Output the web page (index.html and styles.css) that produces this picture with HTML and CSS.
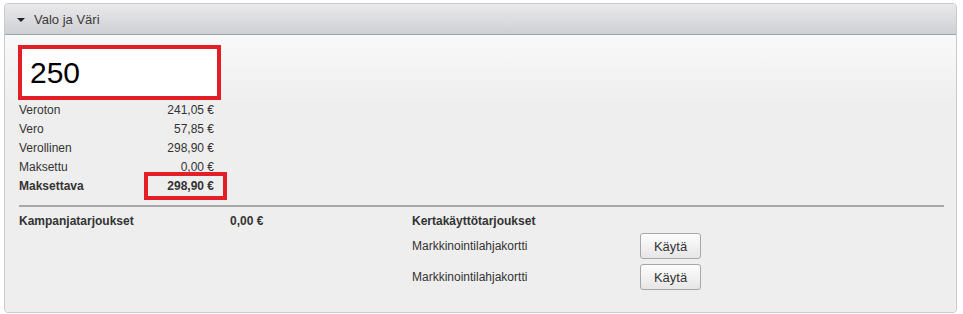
FILE: index.html
```html
<!DOCTYPE html>
<html lang="fi">
<head>
    <meta charset="UTF-8">
    <title>Valo ja Väri</title>
    <link rel="stylesheet" href="styles.css">
</head>
<body>
    <div class="panel">
        <div class="panel-head">
            <span class="caret"></span>
            <span class="panel-title">Valo ja Väri</span>
        </div>
        <div class="panel-body">
            <div class="amount-box">250</div>

            <table class="totals">
                <tr><td>Veroton</td><td class="num">241,05 €</td></tr>
                <tr><td>Vero</td><td class="num">57,85 €</td></tr>
                <tr><td>Verollinen</td><td class="num">298,90 €</td></tr>
                <tr><td>Maksettu</td><td class="num">0,00 €</td></tr>
                <tr class="strong"><td>Maksettava</td><td class="num"><span class="mark">298,90 €</span></td></tr>
            </table>

            <hr class="divider">

            <div class="offers">
                <div class="campaign">
                    <span class="campaign-label">Kampanjatarjoukset</span>
                    <span class="campaign-value">0,00 €</span>
                </div>
                <div class="single-use">
                    <div class="single-title">Kertakäyttötarjoukset</div>
                    <div class="offer-row">
                        <span class="offer-name">Markkinointilahjakortti</span>
                        <button class="btn">Käytä</button>
                    </div>
                    <div class="offer-row">
                        <span class="offer-name">Markkinointilahjakortti</span>
                        <button class="btn">Käytä</button>
                    </div>
                </div>
            </div>
        </div>
    </div>
</body>
</html>
```

FILE: styles.css
```css
body {
    margin: 0;
    padding: 3px 6px 2px 4px;
    font-family: "Liberation Sans", Arial, sans-serif;
    font-size: 12px;
    color: #333;
    background-color: #ffffff;
}
.panel {
    border: 1px solid #c9cccf;
    border-radius: 4px;
    background-color: #eeeeee;
    overflow: hidden;
}
.panel-head {
    height: 30px;
    display: flex;
    align-items: center;
    padding-left: 12px;
    background: linear-gradient(#e9e9eb, #cfd0d4);
    border-bottom: 1px solid #9aa6ad;
}
.caret {
    width: 0;
    height: 0;
    border-left: 4px solid transparent;
    border-right: 4px solid transparent;
    border-top: 4px solid #222;
    margin-right: 9px;
    margin-top: 1px;
}
.panel-title {
    font-size: 13px;
    color: #3a3a3a;
}
.panel-body {
    padding: 10px 12px 17px 13px;
    background: linear-gradient(#f9f9f9, #eeeeee 70px);
}
.amount-box {
    width: 187px;
    height: 47px;
    border: 4px solid #e21f26;
    background-color: #ffffff;
    font-size: 30px;
    line-height: 47px;
    padding-left: 8px;
    color: #000;
}
.totals {
    border-collapse: collapse;
    width: 196px;
    margin-top: 1px;
}
.totals td {
    padding: 0 0 0 1px;
    height: 19px;
    line-height: 19px;
}
.totals .num {
    text-align: right;
}
.totals .strong td {
    font-weight: bold;
}
.mark {
    border: 4px solid #e21f26;
    padding: 3px 9px 3px 19px;
    margin-right: -13px;
}
.divider {
    border: none;
    border-top: 2px solid #a8a8a8;
    margin: 9px 0 0 1px;
    width: 925px;
}
.offers {
    display: flex;
    padding-left: 1px;
    margin-top: 7px;
}
.campaign {
    width: 393px;
    font-weight: bold;
    display: flex;
}
.campaign-label {
    width: 211px;
}
.single-title {
    font-weight: bold;
    margin-bottom: 5px;
}
.offer-row {
    display: flex;
    align-items: center;
    margin-bottom: 5px;
}
.offer-name {
    width: 228px;
}
.btn {
    width: 61px;
    height: 26px;
    padding: 0;
    font-family: "Liberation Sans", Arial, sans-serif;
    font-size: 13px;
    color: #333;
    background: linear-gradient(#fdfdfd, #e6e6e6);
    border: 1px solid #a7a7a7;
    border-radius: 3px;
}
```
